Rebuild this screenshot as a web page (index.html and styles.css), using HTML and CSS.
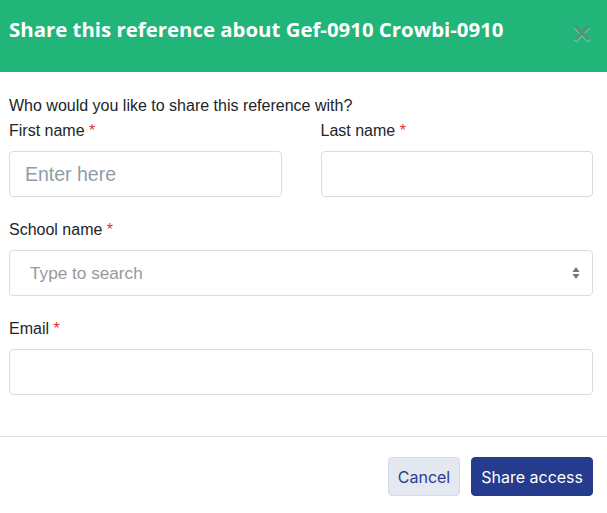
FILE: index.html
```html
<!DOCTYPE html>
<html lang="en">
<head>
  <meta charset="UTF-8">
  <meta name="viewport" content="width=device-width, initial-scale=1.0">
  <title>Share reference</title>
  <link rel="stylesheet" href="styles.css">
</head>
<body>
  <div class="modal">
    <!-- Header -->
    <header class="modal-header">
      <h1>Share this reference about Gef-0910 Crowbi-0910</h1>
      <button class="close-button" aria-label="Close">
        <svg width="20" height="20" viewBox="0 0 20 20">
          <path d="M3 3 L17 17 M17 3 L3 17" stroke="currentColor" stroke-width="3.5" stroke-linecap="butt"/>
        </svg>
      </button>
    </header>

    <!-- Form -->
    <form class="modal-body">
      <p class="intro">Who would you like to share this reference with?</p>
      <div class="row">
        <div class="field">
          <label>First name <span class="req">*</span></label>
          <input type="text" placeholder="Enter here">
        </div>
        <div class="field">
          <label>Last name <span class="req">*</span></label>
          <input type="text">
        </div>
      </div>
      <div class="field">
        <label>School name <span class="req">*</span></label>
        <div class="select-box">
          <span class="select-placeholder">Type to search</span>
          <span class="arrows">
            <svg width="8" height="14" viewBox="0 0 8 14">
              <path d="M4 1 L7.5 6 L0.5 6 Z M4 13 L7.5 8 L0.5 8 Z" fill="#6c7682"/>
            </svg>
          </span>
        </div>
      </div>
      <div class="field">
        <label>Email <span class="req">*</span></label>
        <input type="email">
      </div>
    </form>

    <!-- Footer -->
    <footer class="modal-footer">
      <button class="btn btn-cancel">Cancel</button>
      <button class="btn btn-share">Share access</button>
    </footer>
  </div>
</body>
</html>
```

FILE: styles.css
```css
*,
*::before,
*::after {
  box-sizing: border-box;
  margin: 0;
  padding: 0;
}

body {
  font-family: "Liberation Sans", Arial, sans-serif;
  font-size: 16px;
  line-height: 24px;
  color: #212529;
  background-color: #fff;
}

/* Header styles */
.modal-header {
  height: 72px;
  background-color: #22b57a;
  display: flex;
  align-items: flex-start;
  justify-content: space-between;
  padding: 15px 15px 0 9px;
}

.modal-header h1 {
  font-family: "Open Sans", Lato, sans-serif;
  font-size: 20.4px;
  font-weight: 700;
  line-height: 28px;
  color: #fff;
}

.close-button {
  margin-top: 8px;
  background: none;
  border: none;
  color: #4a967a;
  width: 20px;
  height: 20px;
  filter: drop-shadow(0 1px 0 rgba(255, 255, 255, 0.45));
  cursor: pointer;
}

/* Body styles */
.modal-body {
  padding: 22px 14px 0 9px;
  display: flex;
  flex-direction: column;
  gap: 21px;
}

.intro {
  margin-bottom: -20px;
}

.row {
  display: grid;
  grid-template-columns: 1fr 1fr;
  column-gap: 39px;
}

.field label {
  display: block;
  margin-bottom: 8px;
}

.req {
  color: #e3342f;
}

.field input,
.select-box {
  width: 100%;
  height: 46px;
  border: 1px solid #d5dee4;
  border-radius: 4px;
  background: #fff;
  font-family: "Liberation Sans", Arial, sans-serif;
  font-size: 19.5px;
  padding: 0 15px;
  color: #212529;
}

.field input::placeholder {
  color: #8f9ca6;
}

.select-box {
  display: flex;
  align-items: center;
  justify-content: space-between;
  padding: 0 12px 0 20px;
}

.select-placeholder {
  color: #999;
  font-size: 17.2px;
}

.arrows {
  display: flex;
}

/* Footer styles */
.modal-footer {
  margin-top: 41px;
  border-top: 1px solid #dee2e6;
  padding: 20px 14px 0 0;
  display: flex;
  justify-content: flex-end;
  gap: 11px;
}

.btn {
  height: 39px;
  border-radius: 4px;
  font-family: Inter, "Open Sans", sans-serif;
  font-size: 16px;
  padding: 0 9px;
  cursor: pointer;
}

.btn-cancel {
  background-color: #e4e8f0;
  border: 1px solid #d6dbe6;
  color: #2a3d8f;
}

.btn-share {
  background-color: #243b8e;
  border: 1px solid #243b8e;
  color: #fff;
}
```
